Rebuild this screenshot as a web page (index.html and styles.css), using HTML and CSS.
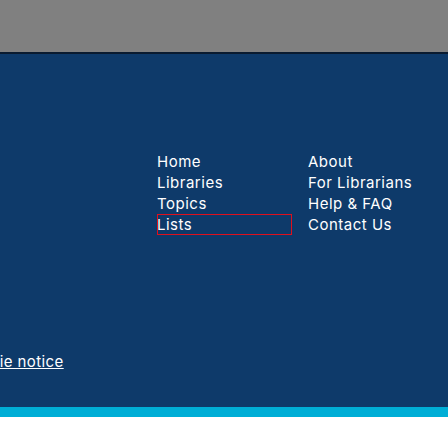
FILE: index.html
```html
<!DOCTYPE html>
<html lang="en">
<head>
<meta charset="utf-8">
<title>Footer</title>
<link rel="stylesheet" href="styles.css">
</head>
<body>
<header class="topbar"></header>
<footer class="footer">
  <nav class="footer-nav">
    <ul class="nav-col">
      <li><a class="nav-link" href="#">Home</a></li>
      <li><a class="nav-link" href="#">Libraries</a></li>
      <li><a class="nav-link" href="#">Topics</a></li>
      <li><a class="nav-link nav-link--focus" href="#">Lists</a></li>
    </ul>
    <ul class="nav-col">
      <li><a class="nav-link" href="#">About</a></li>
      <li><a class="nav-link" href="#">For Librarians</a></li>
      <li><a class="nav-link" href="#">Help &amp; FAQ</a></li>
      <li><a class="nav-link" href="#">Contact Us</a></li>
    </ul>
  </nav>
  <div class="legal">
    <a class="legal-link" href="#">Cookie notice</a>
  </div>
</footer>
<div class="accent"></div>
</body>
</html>
```
FILE: styles.css
```css
* { box-sizing: border-box; }
html, body {
  margin: 0;
  padding: 0;
  background: #ffffff;
  font-family: Inter, "Liberation Sans", Arial, sans-serif;
}
.topbar {
  height: 54px;
  background: #808080;
  border-bottom: 2px solid #0a1b30;
}
.footer {
  background: #0e3a6a;
  height: 353px;
  display: flex;
  flex-direction: column;
  padding-top: 97px;
}
.footer-nav {
  display: flex;
  gap: 16px;
  padding-left: 157px;
}
.nav-col {
  list-style: none;
  margin: 0;
  padding: 0;
  width: 135px;
}
.nav-link {
  display: block;
  height: 21px;
  line-height: 21px;
  color: #ffffff;
  text-decoration: none;
  font-size: 15px;
  font-weight: 400;
  letter-spacing: 0.5px;
}
.nav-link--focus {
  outline: 1px solid #e0101c;
  outline-offset: -1px;
}
.legal {
  margin-top: 116px;
  margin-left: -39px;
}
.legal-link {
  color: #ffffff;
  font-size: 15px;
  letter-spacing: 0.4px;
  text-decoration: underline;
}
.accent {
  height: 10px;
  background: #00aed6;
}
```
